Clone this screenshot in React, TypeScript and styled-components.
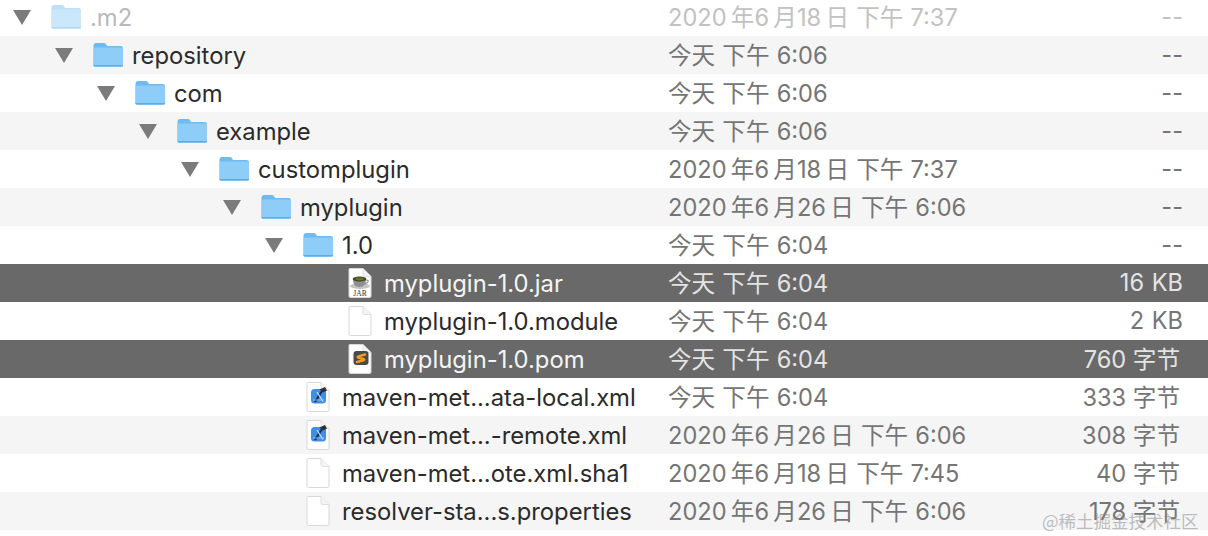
import React from "react";
import styled, { createGlobalStyle } from "styled-components";

const Global = createGlobalStyle`
  html, body { margin: 0; padding: 0; background: #fff; overflow: hidden; }
  body { width: 1208px; height: 536px; font-family: Inter, "Noto Sans CJK SC", sans-serif; }
`;

const Window = styled.div`
  position: relative;
  width: 1208px;
  height: 536px;
  overflow: hidden;
`;
const List = styled.div`
  display: flex;
  flex-direction: column;
  margin-top: -2px;
`;
const Row = styled.div<{ $tone: "white" | "gray" | "selected" }>`
  display: grid;
  grid-template-columns: 669px 1fr 120px;
  align-items: center;
  height: 38px;
  padding-right: 25px;
  font-size: 23.6px;
  word-spacing: 0.5px;
  background: ${(p) => (p.$tone === "selected" ? "#696969" : p.$tone === "gray" ? "#f5f5f5" : "#fff")};
`;
const NameCell = styled.div<{ $level: number }>`
  display: flex;
  align-items: center;
  padding-left: ${(p) => 13 + p.$level * 42}px;
`;
const Disclosure = styled.svg`
  width: 18px;
  height: 15px;
  margin-right: 20px;
  flex: none;
`;
const Spacer = styled.span`
  width: 18px;
  margin-right: 20px;
  flex: none;
`;
const IconSlot = styled.span<{ $dim?: boolean }>`
  display: flex;
  justify-content: center;
  width: 30px;
  height: 30px;
  margin-right: 9px;
  flex: none;
  opacity: ${(p) => (p.$dim ? 0.45 : 1)};
`;
const Name = styled.span<{ $sel: boolean; $dim?: boolean }>`
  font-size: 23.8px;
  color: ${(p) => (p.$sel ? "#f5f5f5" : p.$dim ? "#b9b9b9" : "#2b2b2b")};
  white-space: nowrap;
`;
const DateCell = styled.span<{ $sel: boolean; $dim?: boolean }>`
  margin-top: -2px;
  margin-left: -1px;
  color: ${(p) => (p.$sel ? "#e4e4e4" : p.$dim ? "#c2c2c2" : "#757575")};
  white-space: nowrap;
`;
const SizeCell = styled(DateCell)<{ $bytes: boolean }>`
  text-align: right;
  padding-right: ${(p) => (p.$bytes ? 3 : 0)}px;
  word-spacing: ${(p) => (p.$bytes ? 0 : "1px")};
`;
const Watermark = styled.div`
  position: absolute;
  left: 1042px;
  top: 508px;
  font-size: 17.5px;
  color: rgba(130, 130, 130, 0.5);
  font-family: "Noto Sans CJK SC", sans-serif;
  white-space: nowrap;
`;

const Folder = () => (
  <svg width="30" height="30" viewBox="0 0 30 30">
    <path d="M0.5 6 Q0.5 3 3 3 H11 Q12.5 3 13.5 5 L14 6 H27.5 Q30 6 30 8.5 V25 Q30 27 28 27 H2.5 Q0.5 27 0.5 25 Z" fill="#6fbbef" />
    <path d="M0.5 9 Q0.5 7.5 2 7.5 H28.5 Q30 7.5 30 9 V25 Q30 26.5 28 26.5 H2.5 Q0.5 26.5 0.5 25 Z" fill="#8dcdf8" />
    <path d="M0.5 25.6 H30" stroke="#5ca6dc" strokeWidth="1" fill="none" />
  </svg>
);
const Page = ({ children }: { children?: React.ReactNode }) => (
  <svg width="24" height="30" viewBox="0 0 24 30">
    <path d="M1.5 .5 H15 L23 8.5 V28 Q23 29.5 21.5 29.5 H2.5 Q1 29.5 1 28 V1 Z" fill="#fff" stroke="#d8d8d8" strokeWidth="1" />
    <path d="M15 .5 V7 Q15 8.5 16.5 8.5 H23" fill="#f4f4f4" stroke="#dfdfdf" strokeWidth="1" />
    {children}
  </svg>
);
const JarIcon = () => (
  <Page>
    <ellipse cx="12" cy="18" rx="10" ry="3" fill="#c4c4c4" />
    <path d="M5 11 H18 Q18 19 11.5 19 Q5 19 5 11 Z" fill="#8f8f8f" />
    <ellipse cx="11.5" cy="11" rx="6.8" ry="2.6" fill="#3f4418" />
    <ellipse cx="11.5" cy="11" rx="4.4" ry="1.4" fill="#66722a" />
    <path d="M18 12 Q21.5 12 19.5 14.5 L16.5 16" stroke="#8f8f8f" strokeWidth="1.2" fill="none" />
    <text x="12" y="27.5" textAnchor="middle" fontFamily="Liberation Serif, serif" fontSize="7.5" fill="#333">JAR</text>
  </Page>
);
const SublimeIcon = () => (
  <Page>
    <rect x="5.5" y="7" width="15" height="14" rx="3" fill="#4a4a4a" />
    <path d="M17 10.5 L10.5 12.3 Q8.6 13 10.5 13.8 L15.5 15 Q17.2 15.7 15.5 16.4 L9 18" stroke="#f39a27" strokeWidth="2.4" fill="none" strokeLinecap="round" strokeLinejoin="round" />
  </Page>
);
const XcodeIcon = () => (
  <Page>
    <rect x="5" y="7" width="15" height="14.5" rx="3.5" fill="#3f8fe6" />
    <path d="M9 20 L16 9" stroke="#1d2f4f" strokeWidth="2.2" fill="none" />
    <path d="M13.5 7.5 L19 5 L21 8.5 L17 10.5 Z" fill="#2c3138" />
    <path d="M11 10 L17 19.5" stroke="#d6e7fa" strokeWidth="1.1" fill="none" />
    <path d="M7 18 H18" stroke="#a7ccf3" strokeWidth=".8" fill="none" />
  </Page>
);

type Kind = "folder" | "jar" | "plain" | "sublime" | "xcode";
const icons: Record<Kind, React.ReactNode> = {
  folder: <Folder />,
  jar: <JarIcon />,
  plain: <Page />,
  sublime: <SublimeIcon />,
  xcode: <XcodeIcon />,
};

const full = (day: string, time: string) => `2020\u2009年6\u2009月18\u2009日 下午 ${time}`.replace("18", day);
const rows: { level: number; kind: Kind; name: string; date: string; size: string; sel?: boolean }[] = [
  { level: 0, kind: "folder", name: ".m2", date: full("18", "7:37"), size: "--" },
  { level: 1, kind: "folder", name: "repository", date: "今天 下午 6:06", size: "--" },
  { level: 2, kind: "folder", name: "com", date: "今天 下午 6:06", size: "--" },
  { level: 3, kind: "folder", name: "example", date: "今天 下午 6:06", size: "--" },
  { level: 4, kind: "folder", name: "customplugin", date: full("18", "7:37"), size: "--" },
  { level: 5, kind: "folder", name: "myplugin", date: full("26", "6:06"), size: "--" },
  { level: 6, kind: "folder", name: "1.0", date: "今天 下午 6:04", size: "--" },
  { level: 7, kind: "jar", name: "myplugin-1.0.jar", date: "今天 下午 6:04", size: "16 KB", sel: true },
  { level: 7, kind: "plain", name: "myplugin-1.0.module", date: "今天 下午 6:04", size: "2 KB" },
  { level: 7, kind: "sublime", name: "myplugin-1.0.pom", date: "今天 下午 6:04", size: "760 字节", sel: true },
  { level: 6, kind: "xcode", name: "maven-met...ata-local.xml", date: "今天 下午 6:04", size: "333 字节" },
  { level: 6, kind: "xcode", name: "maven-met...-remote.xml", date: full("26", "6:06"), size: "308 字节" },
  { level: 6, kind: "plain", name: "maven-met...ote.xml.sha1", date: full("18", "7:45"), size: "40 字节" },
  { level: 6, kind: "plain", name: "resolver-sta...s.properties", date: full("26", "6:06"), size: "178 字节" },
];

export default function App() {
  return (
    <Window>
      <Global />
      <List>
        {rows.map((r, i) => {
          const dim = i === 0;
          const sel = !!r.sel;
          return (
            <Row key={r.name} $tone={sel ? "selected" : i % 2 ? "gray" : "white"}>
              <NameCell $level={r.level}>
                {r.kind === "folder" ? (
                  <Disclosure viewBox="0 0 18 15">
                    <path d="M0 0 H18 L9 15 Z" fill="#7b7b7b" />
                  </Disclosure>
                ) : (
                  <Spacer />
                )}
                <IconSlot $dim={dim}>{icons[r.kind]}</IconSlot>
                <Name $sel={sel} $dim={dim}>{r.name}</Name>
              </NameCell>
              <DateCell $sel={sel} $dim={dim}>{r.date}</DateCell>
              <SizeCell $sel={sel} $dim={dim} $bytes={r.size.includes("字")}>{r.size}</SizeCell>
            </Row>
          );
        })}
      </List>
      <Watermark>@稀土掘金技术社区</Watermark>
    </Window>
  );
}
